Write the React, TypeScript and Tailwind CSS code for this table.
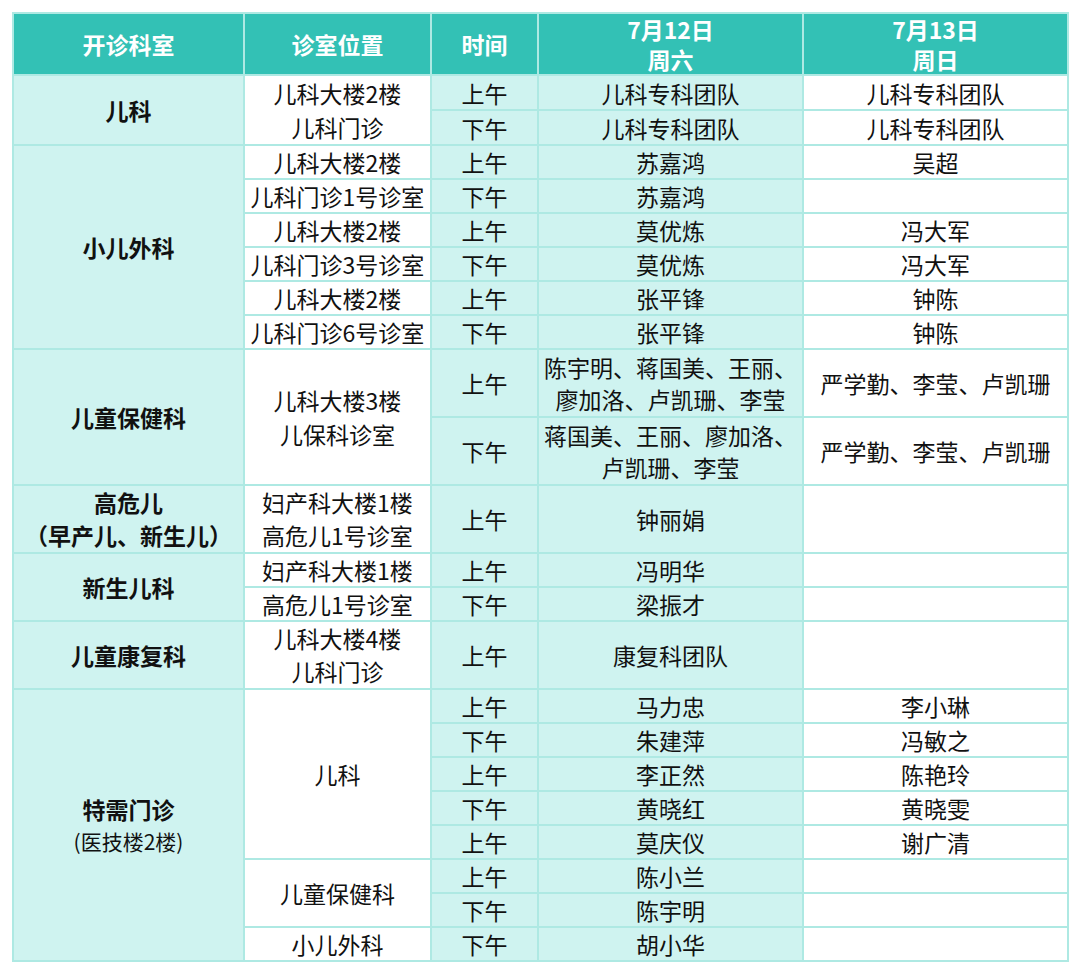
import React from "react";

type Slot = { time: string; d1: React.ReactNode; d2: React.ReactNode };

const cell = "border-2 border-[#aee9e3] p-0 text-center align-middle";
const cyan = "bg-[#cff3f0]";

function Lines({ items, lh = "leading-[34px]" }: { items: string[]; lh?: string }) {
  return (
    <>
      {items.map((t, i) => (
        <div key={i} className={lh}>
          {t}
        </div>
      ))}
    </>
  );
}

export default function App() {
  const surgery: [string[], Slot[]][] = [
    [
      ["儿科大楼2楼", "儿科门诊1号诊室"],
      [
        { time: "上午", d1: "苏嘉鸿", d2: "吴超" },
        { time: "下午", d1: "苏嘉鸿", d2: "" },
      ],
    ],
    [
      ["儿科大楼2楼", "儿科门诊3号诊室"],
      [
        { time: "上午", d1: "莫优炼", d2: "冯大军" },
        { time: "下午", d1: "莫优炼", d2: "冯大军" },
      ],
    ],
    [
      ["儿科大楼2楼", "儿科门诊6号诊室"],
      [
        { time: "上午", d1: "张平锋", d2: "钟陈" },
        { time: "下午", d1: "张平锋", d2: "钟陈" },
      ],
    ],
  ];

  const special: [string, Slot[]][] = [
    [
      "儿科",
      [
        { time: "上午", d1: "马力忠", d2: "李小琳" },
        { time: "下午", d1: "朱建萍", d2: "冯敏之" },
        { time: "上午", d1: "李正然", d2: "陈艳玲" },
        { time: "下午", d1: "黄晓红", d2: "黄晓雯" },
        { time: "上午", d1: "莫庆仪", d2: "谢广清" },
      ],
    ],
    [
      "儿童保健科",
      [
        { time: "上午", d1: "陈小兰", d2: "" },
        { time: "下午", d1: "陈宇明", d2: "" },
      ],
    ],
    ["小儿外科", [{ time: "下午", d1: "胡小华", d2: "" }]],
  ];

  return (
    <div
      className="min-h-[974px] bg-white p-3 text-[23px] text-[#111]"
      style={{ fontFamily: '"Noto Sans CJK SC", "Noto Sans", sans-serif' }}
    >
      <table className="w-[1055px] table-fixed border-collapse leading-[30px]">
        <colgroup>
          <col className="w-[231px]" />
          <col className="w-[187px]" />
          <col className="w-[107px]" />
          <col className="w-[265px]" />
          <col className="w-[265px]" />
        </colgroup>
        <thead>
          <tr className="h-[60px] bg-[#33c1b5] font-bold text-white">
            <th className={cell}>开诊科室</th>
            <th className={cell}>诊室位置</th>
            <th className={cell}>时间</th>
            <th className={cell}>
              <Lines items={["7月12日", "周六"]} lh="leading-[30px]" />
            </th>
            <th className={cell}>
              <Lines items={["7月13日", "周日"]} lh="leading-[30px]" />
            </th>
          </tr>
        </thead>
        <tbody>
          {/* 儿科 */}
          <tr className="h-[34px]">
            <td rowSpan={2} className={`${cell} ${cyan} font-bold`}>儿科</td>
            <td rowSpan={2} className={`${cell} bg-white`}>
              <Lines items={["儿科大楼2楼", "儿科门诊"]} />
            </td>
            <td className={`${cell} ${cyan}`}>上午</td>
            <td className={`${cell} ${cyan}`}>儿科专科团队</td>
            <td className={`${cell} bg-white`}>儿科专科团队</td>
          </tr>
          <tr className="h-[34px]">
            <td className={`${cell} ${cyan}`}>下午</td>
            <td className={`${cell} ${cyan}`}>儿科专科团队</td>
            <td className={`${cell} bg-white`}>儿科专科团队</td>
          </tr>

          {/* 小儿外科 */}
          {surgery.map(([loc, slots], gi) =>
            slots.map((s, si) => (
              <tr key={`s${gi}${si}`} className="h-[34px]">
                {gi === 0 && si === 0 && (
                  <td rowSpan={6} className={`${cell} ${cyan} font-bold`}>小儿外科</td>
                )}
                <td className={`${cell} bg-white`}>{loc[si]}</td>
                <td className={`${cell} ${cyan}`}>{s.time}</td>
                <td className={`${cell} ${cyan}`}>{s.d1}</td>
                <td className={`${cell} bg-white`}>{s.d2}</td>
              </tr>
            ))
          )}

          {/* 儿童保健科 */}
          <tr className="h-[68px]">
            <td rowSpan={2} className={`${cell} ${cyan} font-bold`}>儿童保健科</td>
            <td rowSpan={2} className={`${cell} bg-white`}>
              <Lines items={["儿科大楼3楼", "儿保科诊室"]} lh="leading-[34px]" />
            </td>
            <td className={`${cell} ${cyan}`}>上午</td>
            <td className={`${cell} ${cyan}`}>
              <Lines items={["陈宇明、蒋国美、王丽、", "廖加洛、卢凯珊、李莹"]} lh="leading-[32px]" />
            </td>
            <td className={`${cell} bg-white`}>严学勤、李莹、卢凯珊</td>
          </tr>
          <tr className="h-[68px]">
            <td className={`${cell} ${cyan}`}>下午</td>
            <td className={`${cell} ${cyan}`}>
              <Lines items={["蒋国美、王丽、廖加洛、", "卢凯珊、李莹"]} lh="leading-[32px]" />
            </td>
            <td className={`${cell} bg-white`}>严学勤、李莹、卢凯珊</td>
          </tr>

          {/* 高危儿 */}
          <tr className="h-[68px]">
            <td className={`${cell} ${cyan} font-bold`}>
              <Lines items={["高危儿", "（早产儿、新生儿）"]} lh="leading-[33px]" />
            </td>
            <td className={`${cell} bg-white`}>
              <Lines items={["妇产科大楼1楼", "高危儿1号诊室"]} lh="leading-[33px]" />
            </td>
            <td className={`${cell} ${cyan}`}>上午</td>
            <td className={`${cell} ${cyan}`}>钟丽娟</td>
            <td className={`${cell} bg-white`}></td>
          </tr>

          {/* 新生儿科 */}
          <tr className="h-[34px]">
            <td rowSpan={2} className={`${cell} ${cyan} font-bold`}>新生儿科</td>
            <td className={`${cell} bg-white`}>妇产科大楼1楼</td>
            <td className={`${cell} ${cyan}`}>上午</td>
            <td className={`${cell} ${cyan}`}>冯明华</td>
            <td className={`${cell} bg-white`}></td>
          </tr>
          <tr className="h-[34px]">
            <td className={`${cell} bg-white`}>高危儿1号诊室</td>
            <td className={`${cell} ${cyan}`}>下午</td>
            <td className={`${cell} ${cyan}`}>梁振才</td>
            <td className={`${cell} bg-white`}></td>
          </tr>

          {/* 儿童康复科 */}
          <tr className="h-[68px]">
            <td className={`${cell} ${cyan} font-bold`}>儿童康复科</td>
            <td className={`${cell} bg-white`}>
              <Lines items={["儿科大楼4楼", "儿科门诊"]} lh="leading-[33px]" />
            </td>
            <td className={`${cell} ${cyan}`}>上午</td>
            <td className={`${cell} ${cyan}`}>康复科团队</td>
            <td className={`${cell} bg-white`}></td>
          </tr>

          {/* 特需门诊 */}
          {special.map(([loc, slots], gi) =>
            slots.map((s, si) => (
              <tr key={`t${gi}${si}`} className="h-[34px]">
                {gi === 0 && si === 0 && (
                  <td rowSpan={8} className={`${cell} ${cyan}`}>
                    <div className="font-bold leading-[32px]">特需门诊</div>
                    <div className="text-[21px] leading-[32px]">(医技楼2楼)</div>
                  </td>
                )}
                {si === 0 && (
                  <td rowSpan={slots.length} className={`${cell} bg-white`}>
                    {loc}
                  </td>
                )}
                <td className={`${cell} ${cyan}`}>{s.time}</td>
                <td className={`${cell} ${cyan}`}>{s.d1}</td>
                <td className={`${cell} bg-white`}>{s.d2}</td>
              </tr>
            ))
          )}
        </tbody>
      </table>
    </div>
  );
}
